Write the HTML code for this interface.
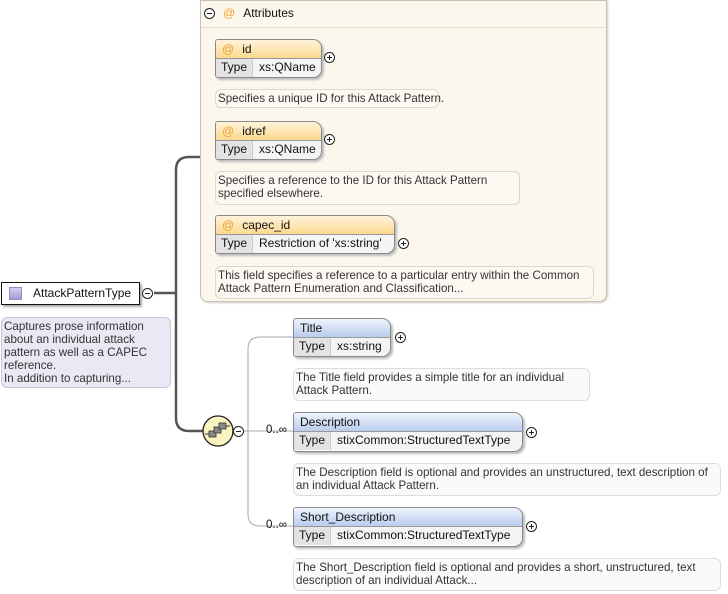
<!DOCTYPE html>
<html><head><meta charset="utf-8"><style>
*{box-sizing:border-box;margin:0;padding:0}
body{width:728px;height:594px;background:#fff;position:relative;overflow:hidden;font-family:"Liberation Sans",sans-serif;font-size:12px;color:#111}
.a{position:absolute}
.attrs{left:200px;top:0;width:407px;height:302px;background:#fcf7ec;border:1px solid #c9c2b4;border-radius:0 0 8px 8px;box-shadow:1px 1px 2px #ccc}
.attrs .hd{position:absolute;left:0;top:0;width:100%;height:27px;border-bottom:1px solid #e6dfd0}
.box{position:absolute;border:1px solid #8a8a8a;border-radius:3px 9px 9px 3px;background:#fff;box-shadow:2px 2px 2px #bbb;overflow:hidden;white-space:nowrap}
.box .h{height:19px;line-height:18px;padding-left:6px;border-bottom:1px solid #999}
.box.o .h{background:linear-gradient(#fff3dc,#fcd88e)}
.box.b .h{background:linear-gradient(#eef3fc,#b9cdee)}
.box .t{height:18px;line-height:17px;display:flex;background:#f4f4f4}
.box .t span:first-child{width:37px;padding-left:5px;background:#e3e3e3;border-right:1px solid #ccc}
.box .t span:last-child{padding-left:6px}
.at{color:#f0a030;margin-right:8px}
.d{position:absolute;border:1px solid #ddd8cc;border-radius:6px;padding:2px 2px;line-height:13px;color:#333;font-size:11.6px;background:rgba(255,255,255,.3)}
.d2{background:#fafafa;border-color:#ddd}
.pl{position:absolute;width:11px;height:11px;border:1px solid #222;border-radius:50%;background:#fff}
.pl::before{content:"";position:absolute;left:2px;top:4px;width:5px;height:1px;background:#222}
.pl.p::after{content:"";position:absolute;left:4px;top:2px;width:1px;height:5px;background:#222}
</style></head><body>
<svg class="a" style="left:0;top:0" width="728" height="594">
<path d="M154 293 H176 M176 170 Q176 157 189 157 H200 M176 170 V418 Q176 431 189 431 H203" stroke="#555" stroke-width="2.5" fill="none"/>
<path d="M243 431 H293 M260 337 Q248 337 248 349 V514 Q248 526 260 526 H293 M260 337 H293" stroke="#aaa" stroke-width="1" fill="none"/>
<circle cx="218" cy="431" r="15" fill="#fbf3c0" stroke="#222" stroke-width="1.3"/>
<g fill="#888" stroke="#333" stroke-width=".8"><rect x="209" y="431" width="7" height="6"/><rect x="214" y="427" width="7" height="6"/><rect x="219" y="423" width="7" height="6"/></g>
<path d="M205 434 H209 M226 426 H230" stroke="#333"/>
</svg>
<div class="a attrs"><div class="hd"></div></div>
<div class="pl" style="left:204px;top:8px"></div>
<div class="a" style="left:223px;top:6px;line-height:15px;font-size:12px"><span class="at">@</span>Attributes</div>

<div class="box o" style="left:215px;top:39px;width:107px;height:39px"><div class="h"><span class="at">@</span>id</div><div class="t"><span>Type</span><span>xs:QName</span></div></div>
<div class="pl p" style="left:324px;top:52px"></div>
<div class="d" style="left:215px;top:89px;width:224px;height:19px;white-space:nowrap">Specifies a unique ID for this Attack Pattern.</div>

<div class="box o" style="left:215px;top:121px;width:107px;height:39px"><div class="h"><span class="at">@</span>idref</div><div class="t"><span>Type</span><span>xs:QName</span></div></div>
<div class="pl p" style="left:324px;top:134px"></div>
<div class="d" style="left:215px;top:171px;width:305px;height:34px">Specifies a reference to the ID for this Attack Pattern specified elsewhere.</div>

<div class="box o" style="left:215px;top:215px;width:180px;height:39px"><div class="h"><span class="at">@</span>capec_id</div><div class="t"><span>Type</span><span>Restriction of 'xs:string'</span></div></div>
<div class="pl p" style="left:398px;top:238px"></div>
<div class="d" style="left:215px;top:266px;width:379px;height:33px">This field specifies a reference to a particular entry within the Common Attack Pattern Enumeration and Classification...</div>

<div class="a" style="left:1px;top:282px;width:139px;height:23px;border:1px solid #111;background:#fff;box-shadow:2px 2px 2px #aaa;line-height:21px;padding-left:31px">AttackPatternType</div>
<div class="a" style="left:9px;top:287px;width:13px;height:13px;background:linear-gradient(#d8cdf0,#a897d6);border:1px solid #9a8bc0"></div>
<div class="pl" style="left:142px;top:288px"></div>
<div class="d" style="left:1px;top:317px;width:170px;height:71px;background:#ebe7f3;border-color:#cbc5dc">Captures prose information about an individual attack pattern as well as a CAPEC reference.<br>In addition to capturing...</div>

<div class="pl" style="left:233px;top:426px"></div>

<div class="box b" style="left:293px;top:318px;width:98px;height:39px"><div class="h">Title</div><div class="t"><span>Type</span><span>xs:string</span></div></div>
<div class="pl p" style="left:395px;top:332px"></div>
<div class="d d2" style="left:293px;top:368px;width:297px;height:33px">The Title field provides a simple title for an individual Attack Pattern.</div>

<div class="a" style="left:266px;top:424px;font-size:11.5px">0..∞</div>
<div class="box b" style="left:293px;top:412px;width:230px;height:40px"><div class="h">Description</div><div class="t"><span>Type</span><span>stixCommon:StructuredTextType</span></div></div>
<div class="pl p" style="left:526px;top:427px"></div>
<div class="d d2" style="left:293px;top:463px;width:428px;height:33px">The Description field is optional and provides an unstructured, text description of an individual Attack Pattern.</div>

<div class="a" style="left:266px;top:519px;font-size:11.5px">0..∞</div>
<div class="box b" style="left:293px;top:507px;width:230px;height:40px"><div class="h">Short_Description</div><div class="t"><span>Type</span><span>stixCommon:StructuredTextType</span></div></div>
<div class="pl p" style="left:526px;top:521px"></div>
<div class="d d2" style="left:293px;top:558px;width:428px;height:33px">The Short_Description field is optional and provides a short, unstructured, text description of an individual Attack...</div>
</body></html>
